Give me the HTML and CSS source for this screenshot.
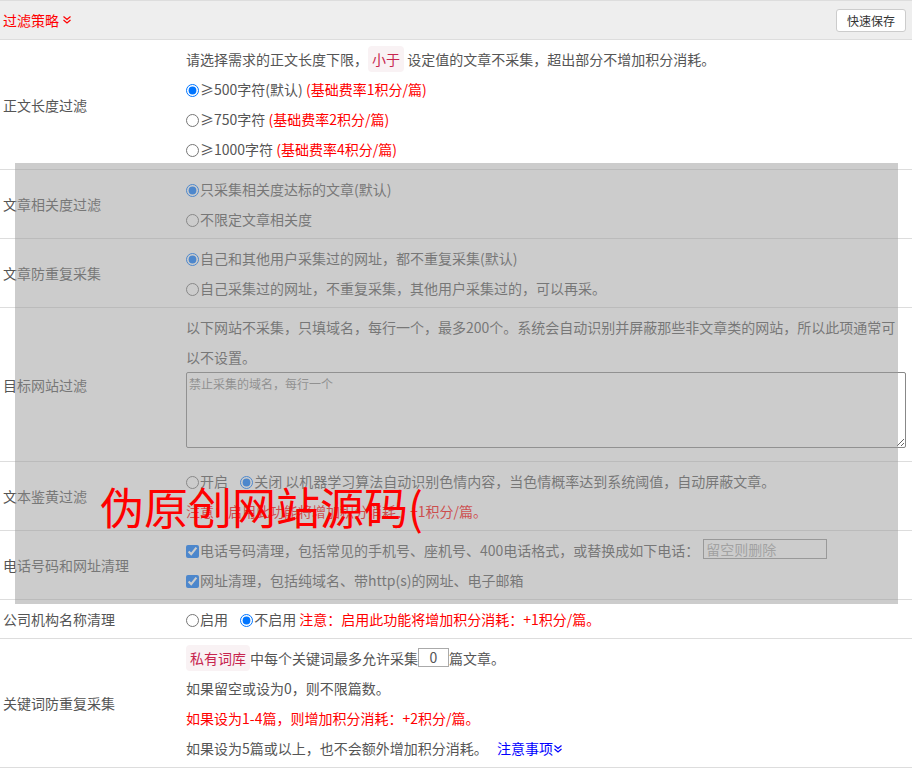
FILE: index.html
```html
<!DOCTYPE html>
<html lang="zh-CN">
  <head>
    <meta charset="UTF-8" />
    <meta name="viewport" content="width=device-width, initial-scale=1.0" />
    <title>过滤策略</title>
    <link rel="stylesheet" href="styles.css">
  </head>
  <body>
    <div class="panel">
      <div class="panel-head">
        <span class="panel-title">过滤策略 <svg class="chev" viewBox="0 0 10 10"><path d="M1.5 1.5l3.5 3 3.5-3M1.5 5l3.5 3 3.5-3" /></svg></span>
        <button class="btn-save">快速保存</button>
      </div>

      <div class="row row-first">
        <div class="row-label">正文长度过滤</div>
        <div class="row-body">
          <div class="line">请选择需求的正文长度下限，<code class="tag">小于</code> 设定值的文章不采集，超出部分不增加积分消耗。</div>
          <label class="line"><input type="radio" name="len" checked>≥500字符(默认) <span class="red">(基础费率1积分/篇)</span></label>
          <label class="line"><input type="radio" name="len">≥750字符 <span class="red">(基础费率2积分/篇)</span></label>
          <label class="line"><input type="radio" name="len">≥1000字符 <span class="red">(基础费率4积分/篇)</span></label>
        </div>
      </div>

      <div class="row">
        <div class="row-label">文章相关度过滤</div>
        <div class="row-body">
          <label class="line"><input type="radio" name="rel" checked>只采集相关度达标的文章(默认)</label>
          <label class="line"><input type="radio" name="rel">不限定文章相关度</label>
        </div>
      </div>

      <div class="row">
        <div class="row-label">文章防重复采集</div>
        <div class="row-body">
          <label class="line"><input type="radio" name="dup" checked>自己和其他用户采集过的网址，都不重复采集(默认)</label>
          <label class="line"><input type="radio" name="dup">自己采集过的网址，不重复采集，其他用户采集过的，可以再采。</label>
        </div>
      </div>

      <div class="row">
        <div class="row-label">目标网站过滤</div>
        <div class="row-body">
          <div class="line">以下网站不采集，只填域名，每行一个，最多200个。系统会自动识别并屏蔽那些非文章类的网站，所以此项通常可以不设置。</div>
          <textarea class="domains" placeholder="禁止采集的域名，每行一个"></textarea>
        </div>
      </div>

      <div class="row">
        <div class="row-label">文本鉴黄过滤</div>
        <div class="row-body">
          <div class="line">
            <label><input type="radio" name="porn">开启</label>
            <label class="gap"><input type="radio" name="porn" checked>关闭</label>
            以机器学习算法自动识别色情内容，当色情概率达到系统阈值，自动屏蔽文章。
          </div>
          <div class="line red">注意：启用此功能将增加积分消耗：+1积分/篇。</div>
        </div>
      </div>

      <div class="row">
        <div class="row-label">电话号码和网址清理</div>
        <div class="row-body">
          <div class="line"><label><input type="checkbox" checked>电话号码清理，包括常见的手机号、座机号、400电话格式，或替换成如下电话：</label><input class="phone" type="text" placeholder="留空则删除"></div>
          <label class="line"><input type="checkbox" checked>网址清理，包括纯域名、带http(s)的网址、电子邮箱</label>
        </div>
      </div>

      <div class="row">
        <div class="row-label">公司机构名称清理</div>
        <div class="row-body">
          <div class="line">
            <label><input type="radio" name="org">启用</label>
            <label class="gap"><input type="radio" name="org" checked>不启用</label>
            <span class="red">注意：启用此功能将增加积分消耗：+1积分/篇。</span>
          </div>
        </div>
      </div>

      <div class="row">
        <div class="row-label">关键词防重复采集</div>
        <div class="row-body">
          <div class="line"><code class="tag">私有词库</code>中每个关键词最多允许采集<input class="num" type="text" value="0">篇文章。</div>
          <div class="line">如果留空或设为0，则不限篇数。</div>
          <div class="line red">如果设为1-4篇，则增加积分消耗：+2积分/篇。</div>
          <div class="line">如果设为5篇或以上，也不会额外增加积分消耗。 <a class="more" href="#">注意事项<svg class="chev" viewBox="0 0 10 10"><path d="M1.5 1.5l3.5 3 3.5-3M1.5 5l3.5 3 3.5-3" /></svg></a></div>
        </div>
      </div>
    </div>

    <div class="mask"></div>
    <div class="watermark">伪原创网站源码(</div>
  </body>
</html>
```

FILE: styles.css
```css
* {
  box-sizing: border-box;
}
html {
  overflow: hidden;
}
body {
  margin: 0;
  font-family: "Noto Sans CJK SC", "Noto Sans", sans-serif;
  font-size: 14px;
  color: #555;
  background: #fff;
}
.panel {
  width: 100%;
}
.panel-head {
  display: flex;
  justify-content: space-between;
  align-items: center;
  height: 40px;
  padding: 0 6px 0 3px;
  background: #eee;
  border-top: 1px solid #ddd;
  border-bottom: 1px solid #ddd;
}
.panel-title {
  color: #f00;
  display: flex;
  align-items: center;
  gap: 3px;
}
.chev {
  width: 10px;
  height: 10px;
}
.chev path {
  fill: none;
  stroke: currentColor;
  stroke-width: 1.2;
}
.btn-save {
  height: 23px;
  padding: 0 10px;
  font-family: inherit;
  font-size: 12px;
  color: #333;
  background: #fff;
  border: 1px solid #ccc;
  border-radius: 3px;
  margin-top: 1px;
}
.row {
  display: grid;
  grid-template-columns: 186px 1fr;
  align-items: center;
  border-bottom: 1px solid #ddd;
}
.row-label {
  padding-left: 3px;
}
.row-body {
  padding: 4px 6px 4px 0;
}
.row-first .row-body {
  padding-bottom: 5px;
}
.line {
  display: block;
  line-height: 30px;
  white-space: nowrap;
}
.row-body > .line:first-child {
  white-space: normal;
}
.red {
  color: #f00;
}
.tag {
  font-family: inherit;
  font-size: 14px;
  color: #c7254e;
  background: #f9f2f4;
  padding: 3px 4px;
  border-radius: 4px;
}
input[type="radio"],
input[type="checkbox"] {
  margin: 0 1px 0 0;
  vertical-align: -2px;
}
.gap {
  margin-left: 9px;
}
.domains {
  display: block;
  width: 720px;
  height: 76px;
  margin: 0 0 9px;
  padding: 2px;
  font-family: inherit;
  font-size: 12px;
  color: #555;
  border: 1px solid #888;
  border-radius: 2px;
}
.domains::placeholder {
  color: #888;
}
.phone {
  width: 124px;
  height: 20px;
  margin-left: 4px;
  padding: 0 2px;
  font-family: inherit;
  font-size: 14px;
  border: 1px solid #999;
  vertical-align: 1px;
}
.phone::placeholder {
  color: #aaa;
}
.num {
  width: 31px;
  height: 19px;
  padding: 0;
  font-family: inherit;
  font-size: 14px;
  text-align: center;
  color: #555;
  border: 1px solid #aaa;
  vertical-align: 1px;
}
.more {
  color: #00f;
  text-decoration: none;
  margin-left: 6px;
}
.mask {
  position: absolute;
  left: 15px;
  top: 163px;
  width: 883px;
  height: 441px;
  background: rgba(153, 153, 153, 0.5);
}
.watermark {
  position: absolute;
  left: 100px;
  top: 477px;
  font-size: 44px;
  line-height: 58px;
  color: #f00;
}
```
